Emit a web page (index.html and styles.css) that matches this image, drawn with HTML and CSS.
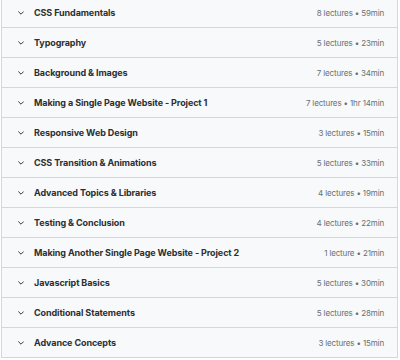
FILE: index.html
```html
<!DOCTYPE html>
<html>
<head>
  <meta charset="utf-8" />
  <title>Course content</title>
  <link rel="stylesheet" href="styles.css">
</head>
<body>
  <div class="curriculum">
    <div class="section-row">
      <svg class="chevron" viewBox="0 0 10 6"><path d="M1 1l4 4 4-4" /></svg>
      <span class="title">CSS Fundamentals</span>
      <span class="meta">8 lectures • 59min</span>
    </div>
    <div class="section-row">
      <svg class="chevron" viewBox="0 0 10 6"><path d="M1 1l4 4 4-4" /></svg>
      <span class="title">Typography</span>
      <span class="meta">5 lectures • 23min</span>
    </div>
    <div class="section-row">
      <svg class="chevron" viewBox="0 0 10 6"><path d="M1 1l4 4 4-4" /></svg>
      <span class="title">Background &amp; Images</span>
      <span class="meta">7 lectures • 34min</span>
    </div>
    <div class="section-row">
      <svg class="chevron" viewBox="0 0 10 6"><path d="M1 1l4 4 4-4" /></svg>
      <span class="title">Making a Single Page Website - Project 1</span>
      <span class="meta">7 lectures • 1hr 14min</span>
    </div>
    <div class="section-row">
      <svg class="chevron" viewBox="0 0 10 6"><path d="M1 1l4 4 4-4" /></svg>
      <span class="title">Responsive Web Design</span>
      <span class="meta">3 lectures • 15min</span>
    </div>
    <div class="section-row">
      <svg class="chevron" viewBox="0 0 10 6"><path d="M1 1l4 4 4-4" /></svg>
      <span class="title">CSS Transition &amp; Animations</span>
      <span class="meta">5 lectures • 33min</span>
    </div>
    <div class="section-row">
      <svg class="chevron" viewBox="0 0 10 6"><path d="M1 1l4 4 4-4" /></svg>
      <span class="title">Advanced Topics &amp; Libraries</span>
      <span class="meta">4 lectures • 19min</span>
    </div>
    <div class="section-row">
      <svg class="chevron" viewBox="0 0 10 6"><path d="M1 1l4 4 4-4" /></svg>
      <span class="title">Testing &amp; Conclusion</span>
      <span class="meta">4 lectures • 22min</span>
    </div>
    <div class="section-row">
      <svg class="chevron" viewBox="0 0 10 6"><path d="M1 1l4 4 4-4" /></svg>
      <span class="title">Making Another Single Page Website - Project 2</span>
      <span class="meta">1 lecture • 21min</span>
    </div>
    <div class="section-row">
      <svg class="chevron" viewBox="0 0 10 6"><path d="M1 1l4 4 4-4" /></svg>
      <span class="title">Javascript Basics</span>
      <span class="meta">5 lectures • 30min</span>
    </div>
    <div class="section-row">
      <svg class="chevron" viewBox="0 0 10 6"><path d="M1 1l4 4 4-4" /></svg>
      <span class="title">Conditional Statements</span>
      <span class="meta">5 lectures • 28min</span>
    </div>
    <div class="section-row">
      <svg class="chevron" viewBox="0 0 10 6"><path d="M1 1l4 4 4-4" /></svg>
      <span class="title">Advance Concepts</span>
      <span class="meta">3 lectures • 15min</span>
    </div>
  </div>
</body>
</html>
```

FILE: styles.css
```css
* {
  margin: 0;
  padding: 0;
  box-sizing: border-box;
}

body {
  font-family: Inter, 'Noto Sans', sans-serif;
  background: #ffffff;
  color: #2d2f31;
}

.curriculum {
  margin: -2px 2px 0 1px;
  border-left: 1px solid #d1d7dc;
  border-right: 1px solid #d1d7dc;
}

.section-row {
  display: flex;
  align-items: center;
  height: 30px;
  padding: 0 13px 0 16px;
  background: #f7f9fa;
  border-bottom: 1px solid #d1d7dc;
}

.chevron {
  width: 6px;
  height: 4px;
  margin-right: 10px;
  fill: none;
  stroke: #2d2f31;
  stroke-width: 1.6;
  stroke-linecap: round;
  stroke-linejoin: round;
}

.title {
  flex: 1;
  font-size: 9px;
  font-weight: 700;
  letter-spacing: -0.1px;
  white-space: nowrap;
}

.meta {
  font-size: 8px;
  color: #6a6f73;
  letter-spacing: -0.15px;
  white-space: nowrap;
}
```
